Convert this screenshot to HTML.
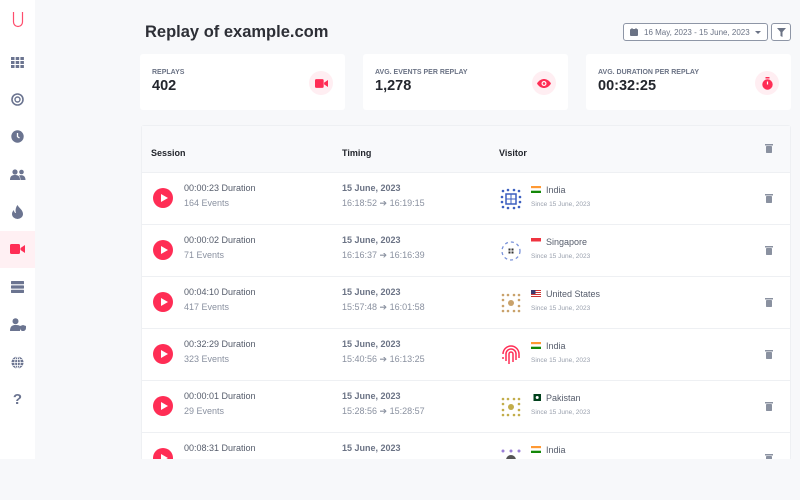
<!DOCTYPE html>
<html><head><meta charset="utf-8"><style>
*{box-sizing:border-box;margin:0;padding:0}
body{width:800px;height:500px;background:#f7f8fa;font-family:"Liberation Sans",sans-serif;position:relative;overflow:hidden}
#clip{position:absolute;left:0;top:0;width:800px;height:459px;overflow:hidden;background:#f7f8fa}
.side{position:absolute;left:0;top:0;width:35px;height:459px;background:#fff}
.si{position:absolute;left:0;width:35px;display:flex;justify-content:center;align-items:center;height:20px}
h1{position:absolute;left:145px;top:23px;font-size:16.5px;font-weight:bold;color:#2d2f36}
.date{position:absolute;left:623px;top:23px;width:145px;height:18px;border:1px solid #8e96a6;border-radius:3px;background:#fff;font-size:8px;color:#6b7385;padding:4px 0 0 20px}
.filt{position:absolute;left:771px;top:23px;width:20px;height:18px;border:1px solid #8e96a6;border-radius:3px;background:#fff}
.card{position:absolute;top:54px;height:56px;width:205px;background:#fff;border-radius:3px}
.card .l{position:absolute;left:12px;top:15px;font-size:7px;font-weight:bold;color:#6b7385}
.card .v{position:absolute;left:12px;top:24px;font-size:14.5px;font-weight:bold;color:#23262d}
.card .ic{position:absolute;right:12px;top:17px;width:24px;height:24px;border-radius:50%;background:#ffeef2;display:flex;align-items:center;justify-content:center}
.tbl{position:absolute;left:141px;top:125px;width:650px;height:400px;background:#fff;border:1px solid #eef0f3;border-radius:3px}
.hd{height:47px;background:#f8f9fb;border-bottom:1px solid #eef0f3;position:relative;font-size:9px;font-weight:bold;color:#23262d}
.hd span{position:absolute;top:22px}
.row{height:52px;border-bottom:1px solid #eef0f3;position:relative;font-size:9px;color:#555c6b}
.play{position:absolute;left:11px;top:15px;width:20px;height:20px;border-radius:50%;background:#ff2d55}
.play:after{content:"";position:absolute;left:8px;top:5.5px;border-left:7px solid #fff;border-top:4.5px solid transparent;border-bottom:4.5px solid transparent}
.t1{position:absolute;left:42px;top:10px}
.t2{position:absolute;left:42px;top:25px;color:#8a91a0}
.d1{position:absolute;left:200px;top:10px;font-weight:bold;color:#6b7385}
.d2{position:absolute;left:200px;top:25px;color:#8a91a0}
.av{position:absolute;left:358px;top:15px;width:22px;height:22px}
.fl{position:absolute;left:389px;top:13px;width:10px;height:7px}
.cn{position:absolute;left:404px;top:12px;color:#555c6b}
.sn{position:absolute;left:389px;top:28px;font-size:6.5px;color:#9aa1ae}
.tr{position:absolute;left:623px;top:21px}
</style></head><body><div id="clip">
<div class="side">
<div class="si" style="top:10px"><svg width="12" height="18" viewBox="0 0 12 18"><path d="M1.5 1v10a4.5 4.5 0 0 0 9 0V1" fill="none" stroke="#ff4d6d" stroke-width="1.2"/></svg></div>
<div class="si" style="top:52px"><svg width="13" height="11" viewBox="0 0 13 11" fill="#6b7490"><rect x="0" y="0" width="3.5" height="3"/><rect x="4.7" y="0" width="3.5" height="3"/><rect x="9.4" y="0" width="3.5" height="3"/><rect x="0" y="4" width="3.5" height="3"/><rect x="4.7" y="4" width="3.5" height="3"/><rect x="9.4" y="4" width="3.5" height="3"/><rect x="0" y="8" width="3.5" height="3"/><rect x="4.7" y="8" width="3.5" height="3"/><rect x="9.4" y="8" width="3.5" height="3"/></svg></div>
<div class="si" style="top:89px"><svg width="13" height="13" viewBox="0 0 13 13"><circle cx="6.5" cy="6.5" r="5.5" fill="none" stroke="#6b7490" stroke-width="1.6"/><circle cx="6.5" cy="6.5" r="2.5" fill="none" stroke="#6b7490" stroke-width="1.4"/></svg></div>
<div class="si" style="top:126px"><svg width="13" height="13" viewBox="0 0 13 13"><circle cx="6.5" cy="6.5" r="6.2" fill="#6b7490"/><path d="M6.5 3v3.7l2 1.3" stroke="#fff" stroke-width="1.3" fill="none"/></svg></div>
<div class="si" style="top:164px"><svg width="16" height="11" viewBox="0 0 16 11" fill="#6b7490"><circle cx="5" cy="3" r="2.6"/><circle cx="11.5" cy="3" r="2.3"/><path d="M0 11c0-4 2-5 5-5s5 1 5 5z"/><path d="M10.5 11c0-3-1-4-1.5-4.5 3-1 6.5 0 6.5 4.5z"/></svg></div>
<div class="si" style="top:202px"><svg width="11" height="14" viewBox="0 0 11 14"><path d="M5.5 0C7 3 11 5 11 9a5.5 5 0 0 1-11 0c0-2 1-3 2-4 0 2 1 3 2 3C3 5 4 2 5.5 0z" fill="#6b7490"/></svg></div>
<div style="position:absolute;left:0;top:231px;width:35px;height:37px;background:#fff0f3"></div>
<div class="si" style="top:239px"><svg width="15" height="10" viewBox="0 0 15 10" fill="#ff2d55"><rect x="0" y="0" width="10" height="10" rx="1.5"/><path d="M10.5 4L15 1v8l-4.5-3z"/></svg></div>
<div class="si" style="top:277px"><svg width="13" height="12" viewBox="0 0 13 12" fill="#6b7490"><rect y="0" width="13" height="3.2" rx=".6"/><rect y="4.4" width="13" height="3.2" rx=".6"/><rect y="8.8" width="13" height="3.2" rx=".6"/></svg></div>
<div class="si" style="top:314px"><svg width="16" height="13" viewBox="0 0 16 13" fill="#6b7490"><circle cx="5.5" cy="3.2" r="3"/><path d="M0 13c0-5 2.5-6 5.5-6s4 .5 4.5 1v5z"/><path d="M13 7l3 1v2c0 2-1.5 3-3 3.2-1.5-.2-3-1.2-3-3.2V8z"/></svg></div>
<div class="si" style="top:352px"><svg width="13" height="13" viewBox="0 0 13 13"><circle cx="6.5" cy="6.5" r="6" fill="#6b7490"/><path d="M.5 6.5h12M6.5.5v12M1.5 3.5h10M1.5 9.5h10" stroke="#fff" stroke-width=".8"/><ellipse cx="6.5" cy="6.5" rx="2.8" ry="6" fill="none" stroke="#fff" stroke-width=".8"/></svg></div>
<div class="si" style="top:389px;font-size:15px;font-weight:bold;color:#6b7490">?</div>
</div>
<h1>Replay of example.com</h1>
<div class="date"><svg style="position:absolute;left:6px;top:4px" width="8" height="8" viewBox="0 0 8 8" fill="#6b7385"><rect y="1" width="8" height="7" rx="1"/><rect x="1.5" width="1" height="2"/><rect x="5.5" width="1" height="2"/></svg>16 May, 2023 - 15 June, 2023<span style="position:absolute;left:131px;top:7px;border-top:3px solid #6b7385;border-left:3px solid transparent;border-right:3px solid transparent"></span></div>
<div class="filt"><svg style="position:absolute;left:5px;top:4px" width="9" height="9" viewBox="0 0 9 9"><path d="M0 0h9L5.5 4v5L3.5 8V4z" fill="#6b7385"/></svg></div>
<div class="card" style="left:140px"><div class="l">REPLAYS</div><div class="v">402</div><div class="ic"><svg width="13" height="9" viewBox="0 0 15 10" fill="#ff2d55"><rect width="10" height="10" rx="1.5"/><path d="M10.5 4L15 1v8l-4.5-3z"/></svg></div></div>
<div class="card" style="left:363px"><div class="l">AVG. EVENTS PER REPLAY</div><div class="v">1,278</div><div class="ic"><svg width="14" height="9" viewBox="0 0 14 9"><path d="M0 4.5C2 1 5 0 7 0s5 1 7 4.5C12 8 9 9 7 9S2 8 0 4.5z" fill="#ff2d55"/><circle cx="7" cy="4.5" r="2.5" fill="#fff"/><circle cx="7" cy="4.5" r="1.3" fill="#ff2d55"/></svg></div></div>
<div class="card" style="left:586px"><div class="l">AVG. DURATION PER REPLAY</div><div class="v">00:32:25</div><div class="ic"><svg width="11" height="13" viewBox="0 0 11 13" fill="#ff2d55"><rect x="3.5" y="0" width="4" height="1.5"/><circle cx="5.5" cy="7.5" r="5.2"/><path d="M5.5 4.5v3" stroke="#fff" stroke-width="1.2"/></svg></div></div>
<div class="tbl">
<div class="hd"><span style="left:9px">Session</span><span style="left:200px">Timing</span><span style="left:357px">Visitor</span><svg style="position:absolute;left:623px;top:18px" width="8" height="9" viewBox="0 0 8 9" fill="#8a91a0"><rect width="8" height="1.5"/><rect x="1" y="2" width="6" height="7" rx=".8"/></svg></div>
<div class="row"><div class="play"></div><div class="t1">00:00:23 Duration</div><div class="t2">164 Events</div><div class="d1">15 June, 2023</div><div class="d2">16:18:52 ➔ 16:19:15</div>
<svg class="av" viewBox="0 0 22 22"><g fill="#3c5fbf"><rect x="6" y="6" width="10" height="10" fill="none" stroke="#3c5fbf" stroke-width="1.5"/><path d="M11 6v10M6 11h10" stroke="#3c5fbf"/><circle cx="3" cy="3" r="1.3"/><circle cx="8" cy="2" r="1.3"/><circle cx="14" cy="2" r="1.3"/><circle cx="19" cy="3" r="1.3"/><circle cx="2" cy="9" r="1.3"/><circle cx="20" cy="9" r="1.3"/><circle cx="2" cy="14" r="1.3"/><circle cx="20" cy="14" r="1.3"/><circle cx="3" cy="19" r="1.3"/><circle cx="8" cy="20" r="1.3"/><circle cx="14" cy="20" r="1.3"/><circle cx="19" cy="19" r="1.3"/></g></svg>
<svg class="fl" viewBox="0 0 10 7"><rect width="10" height="2.3" fill="#f93"/><rect y="2.3" width="10" height="2.4" fill="#fff"/><rect y="4.7" width="10" height="2.3" fill="#138808"/></svg><div class="cn">India</div><div class="sn">Since 15 June, 2023</div>
<svg class="tr" width="8" height="9" viewBox="0 0 8 9" fill="#8a91a0"><rect width="8" height="1.5"/><rect x="1" y="2" width="6" height="7" rx=".8"/></svg></div>
<div class="row"><div class="play"></div><div class="t1">00:00:02 Duration</div><div class="t2">71 Events</div><div class="d1">15 June, 2023</div><div class="d2">16:16:37 ➔ 16:16:39</div>
<svg class="av" viewBox="0 0 22 22"><circle cx="11" cy="11" r="9" fill="none" stroke="#7b93d9" stroke-width="1.3" stroke-dasharray="3 3"/><g fill="#333"><rect x="8.5" y="8.5" width="2" height="2"/><rect x="11.5" y="8.5" width="2" height="2"/><rect x="8.5" y="11.5" width="2" height="2"/><rect x="11.5" y="11.5" width="2" height="2"/></g></svg>
<svg class="fl" viewBox="0 0 10 7"><rect width="10" height="3.5" fill="#ef3340"/><rect y="3.5" width="10" height="3.5" fill="#fff"/></svg><div class="cn">Singapore</div><div class="sn">Since 15 June, 2023</div>
<svg class="tr" width="8" height="9" viewBox="0 0 8 9" fill="#8a91a0"><rect width="8" height="1.5"/><rect x="1" y="2" width="6" height="7" rx=".8"/></svg></div>
<div class="row"><div class="play"></div><div class="t1">00:04:10 Duration</div><div class="t2">417 Events</div><div class="d1">15 June, 2023</div><div class="d2">15:57:48 ➔ 16:01:58</div>
<svg class="av" viewBox="0 0 22 22"><g fill="#c9a26b"><circle cx="11" cy="11" r="3"/><circle cx="3" cy="3" r="1.3"/><circle cx="8" cy="3" r="1.3"/><circle cx="14" cy="3" r="1.3"/><circle cx="19" cy="3" r="1.3"/><circle cx="3" cy="8" r="1.3"/><circle cx="19" cy="8" r="1.3"/><circle cx="3" cy="14" r="1.3"/><circle cx="19" cy="14" r="1.3"/><circle cx="3" cy="19" r="1.3"/><circle cx="8" cy="19" r="1.3"/><circle cx="14" cy="19" r="1.3"/><circle cx="19" cy="19" r="1.3"/></g></svg>
<svg class="fl" viewBox="0 0 10 7"><rect width="10" height="7" fill="#c33"/><rect y="1" width="10" height="1" fill="#fff"/><rect y="3" width="10" height="1" fill="#fff"/><rect y="5" width="10" height="1" fill="#fff"/><rect width="4.5" height="4" fill="#3c3b6e"/></svg><div class="cn">United States</div><div class="sn">Since 15 June, 2023</div>
<svg class="tr" width="8" height="9" viewBox="0 0 8 9" fill="#8a91a0"><rect width="8" height="1.5"/><rect x="1" y="2" width="6" height="7" rx=".8"/></svg></div>
<div class="row"><div class="play"></div><div class="t1">00:32:29 Duration</div><div class="t2">323 Events</div><div class="d1">15 June, 2023</div><div class="d2">15:40:56 ➔ 16:13:25</div>
<svg class="av" viewBox="0 0 22 22" fill="none" stroke="#ff2d55" stroke-width="1.5"><path d="M3 10a8 8 0 0 1 16 0v4"/><path d="M6 17v-7a5 5 0 0 1 10 0v6"/><path d="M9 20v-10a2 2 0 0 1 4 0v8"/><path d="M3 13v2"/></svg>
<svg class="fl" viewBox="0 0 10 7"><rect width="10" height="2.3" fill="#f93"/><rect y="2.3" width="10" height="2.4" fill="#fff"/><rect y="4.7" width="10" height="2.3" fill="#138808"/></svg><div class="cn">India</div><div class="sn">Since 15 June, 2023</div>
<svg class="tr" width="8" height="9" viewBox="0 0 8 9" fill="#8a91a0"><rect width="8" height="1.5"/><rect x="1" y="2" width="6" height="7" rx=".8"/></svg></div>
<div class="row"><div class="play"></div><div class="t1">00:00:01 Duration</div><div class="t2">29 Events</div><div class="d1">15 June, 2023</div><div class="d2">15:28:56 ➔ 15:28:57</div>
<svg class="av" viewBox="0 0 22 22"><g fill="#c2ad4a"><circle cx="11" cy="11" r="3"/><circle cx="3" cy="3" r="1.3"/><circle cx="8" cy="3" r="1.3"/><circle cx="14" cy="3" r="1.3"/><circle cx="19" cy="3" r="1.3"/><circle cx="3" cy="8" r="1.3"/><circle cx="19" cy="8" r="1.3"/><circle cx="3" cy="14" r="1.3"/><circle cx="19" cy="14" r="1.3"/><circle cx="3" cy="19" r="1.3"/><circle cx="8" cy="19" r="1.3"/><circle cx="14" cy="19" r="1.3"/><circle cx="19" cy="19" r="1.3"/></g></svg>
<svg class="fl" viewBox="0 0 10 7"><rect width="10" height="7" fill="#01411c"/><rect width="2.5" height="7" fill="#fff"/><circle cx="6.2" cy="3.5" r="1.5" fill="#fff"/></svg><div class="cn">Pakistan</div><div class="sn">Since 15 June, 2023</div>
<svg class="tr" width="8" height="9" viewBox="0 0 8 9" fill="#8a91a0"><rect width="8" height="1.5"/><rect x="1" y="2" width="6" height="7" rx=".8"/></svg></div>
<div class="row"><div class="play"></div><div class="t1">00:08:31 Duration</div><div class="t2">52 Events</div><div class="d1">15 June, 2023</div><div class="d2">15:10:12 ➔ 15:18:43</div>
<svg class="av" viewBox="0 0 22 22"><g fill="#9a7fd6"><circle cx="3" cy="3" r="1.5"/><circle cx="19" cy="3" r="1.5"/><circle cx="11" cy="3" r="1.5"/></g><circle cx="11" cy="12" r="5" fill="#555"/></svg>
<svg class="fl" viewBox="0 0 10 7"><rect width="10" height="2.3" fill="#f93"/><rect y="2.3" width="10" height="2.4" fill="#fff"/><rect y="4.7" width="10" height="2.3" fill="#138808"/></svg><div class="cn">India</div><div class="sn">Since 15 June, 2023</div>
<svg class="tr" width="8" height="9" viewBox="0 0 8 9" fill="#8a91a0"><rect width="8" height="1.5"/><rect x="1" y="2" width="6" height="7" rx=".8"/></svg></div>
</div>
</div></body></html>
